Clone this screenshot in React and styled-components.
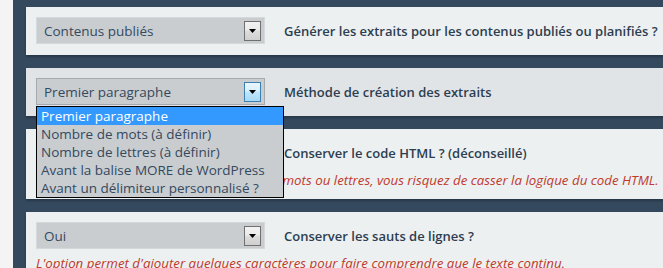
import React from 'react';
import styled, { createGlobalStyle, css } from 'styled-components';

const GlobalStyle = createGlobalStyle`
  html, body {
    margin: 0;
    padding: 0;
    overflow: hidden;
  }
  body {
    font-family: 'Open Sans', 'DejaVu Sans', sans-serif;
    background: #f4f4f4;
  }
`;

const options = [
  'Premier paragraphe',
  'Nombre de mots (à définir)',
  'Nombre de lettres (à définir)',
  'Avant la balise MORE de WordPress',
  'Avant un délimiteur personnalisé ?'
];

const App = () => (
  <Page>
    <GlobalStyle />
    <Strip />
    <Main>
      <Panel>
        <Row>
          <Select value="Contenus publiés" />
          <Label>Générer les extraits pour les contenus publiés ou planifiés ?</Label>
        </Row>
      </Panel>
      <Panel hover>
        <Row>
          <SelectWrap>
            <Select value="Premier paragraphe" focused />
            <List>
              {options.map((opt, i) => (
                <Option key={opt} selected={i === 0}>
                  {opt}
                </Option>
              ))}
            </List>
          </SelectWrap>
          <Label>Méthode de création des extraits</Label>
        </Row>
      </Panel>
      <Panel>
        <Row>
          <Select />
          <Label>Conserver le code HTML ? (déconseillé)</Label>
        </Row>
        <Note>
          <Hidden>Si vous limitez le texte selon le nombre de </Hidden>mots ou lettres, vous risquez de casser la logique du code HTML.
        </Note>
      </Panel>
      <Panel>
        <Row>
          <Select value="Oui" />
          <Label>Conserver les sauts de lignes ?</Label>
        </Row>
        <Note>
          L'option permet d'ajouter quelques caractères pour faire comprendre que le texte continu.
        </Note>
      </Panel>
    </Main>
  </Page>
);

const Select = ({ value, focused }) => (
  <Box focused={focused}>
    <Value>{value}</Value>
    <Arrow focused={focused}>
      <svg width="7" height="4" viewBox="0 0 7 4">
        <path d="M0 0h7L3.5 4z" fill="#000" />
      </svg>
    </Arrow>
  </Box>
);

const Page = styled.div`
  display: flex;
  width: 663px;
  height: 268px;
  overflow: hidden;
`;
const Strip = styled.div`
  width: 13px;
  flex-shrink: 0;
  background: #f4f4f4;
`;
const Main = styled.div`
  flex: 1;
  background: #34495e;
  padding: 7px 0 0 13px;
  display: flex;
  flex-direction: column;
  gap: 13px;
`;
const Panel = styled.div`
  background: ${props => (props.hover ? '#e1e4e6' : '#ecf0f1')};
  padding: 10px 0 11px 10px;
  box-shadow: 0 2px 2px rgba(0, 0, 0, 0.25);
`;
const Row = styled.div`
  display: flex;
  align-items: center;
  gap: 19px;
`;
const SelectWrap = styled.div`
  position: relative;
`;
const Box = styled.div`
  box-sizing: border-box;
  width: 229px;
  height: 27px;
  display: flex;
  align-items: center;
  justify-content: space-between;
  padding: 0 3px 0 7px;
  background: #c9cdd0;
  border: 1px solid ${props => (props.focused ? '#a6aaae' : '#d6d9db')};
`;
const Value = styled.span`
  font-size: 13.5px;
  color: #34495e;
`;
const Arrow = styled.div`
  box-sizing: border-box;
  width: 17px;
  height: 20px;
  margin-left: auto;
  display: flex;
  align-items: center;
  justify-content: center;
  border: 1px solid #707070;
  ${props =>
    props.focused
      ? css`
          border-color: #3c7fb1;
          background: linear-gradient(#eaf6fd, #d9f0fc 45%, #bee6fd 50%, #a7d9f5);
        `
      : css`
          background: linear-gradient(#f2f2f2, #ebebeb 45%, #dddddd 50%, #cfcfcf);
        `}
`;
const List = styled.ul`
  position: absolute;
  top: 28px;
  left: 0;
  z-index: 2;
  width: 248px;
  box-sizing: border-box;
  margin: 0;
  padding: 0;
  list-style: none;
  background: #c9cdd0;
  border: 1px solid #000;
`;
const Option = styled.li`
  height: 18px;
  line-height: 18px;
  padding-left: 4px;
  font-size: 13.5px;
  white-space: nowrap;
  color: ${props => (props.selected ? '#fff' : '#34495e')};
  background: ${props => (props.selected ? '#3399ff' : 'transparent')};
`;
const Label = styled.span`
  font-size: 13px;
  font-weight: 600;
  color: #2c3e50;
  white-space: nowrap;
`;
const Note = styled.p`
  margin: 7px 0 0;
  line-height: 15px;
  font-size: 13.3px;
  font-style: italic;
  color: #c0392b;
  white-space: nowrap;
`;
const Hidden = styled.span`
  visibility: hidden;
`;

export default App;
